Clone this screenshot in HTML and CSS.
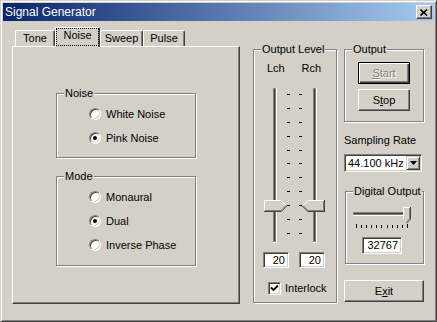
FILE: index.html
```html
<!DOCTYPE html>
<html lang="en">

<head>
    <meta charset="UTF-8">
    <title>Signal Generator</title>
    <link rel="stylesheet" href="styles.css">
</head>

<body>
    <div class="window">
        <div class="titlebar">
            <span class="title">Signal Generator</span>
            <button class="close">
                <svg width="8" height="7" viewBox="0 0 8 7"><path d="M0.5 0.5 L7 6.5 M7 0.5 L0.5 6.5" stroke="#000" stroke-width="1.6" /></svg>
            </button>
        </div>
        <div class="client">
            <div class="tabctl">
                <div class="tabs">
                    <div class="tab tab-tone">Tone</div>
                    <div class="tab tab-noise active"><span>Noise</span></div>
                    <div class="tab tab-sweep">Sweep</div>
                    <div class="tab tab-pulse">Pulse</div>
                </div>
                <div class="pane">
                    <div class="group noise-group">
                        <span class="group-label">Noise</span>
                        <div class="radio-row"><span class="radio"></span>White Noise</div>
                        <div class="radio-row"><span class="radio checked"></span>Pink Noise</div>
                    </div>
                    <div class="group mode-group">
                        <span class="group-label">Mode</span>
                        <div class="radio-row"><span class="radio"></span>Monaural</div>
                        <div class="radio-row"><span class="radio checked"></span>Dual</div>
                        <div class="radio-row"><span class="radio"></span>Inverse Phase</div>
                    </div>
                </div>
            </div>

            <div class="group level-group">
                <span class="group-label">Output Level</span>
                <div class="level-head">
                    <span class="ch">Lch</span>
                    <span class="ch">Rch</span>
                </div>
                <svg class="level-sliders" width="68" height="160" viewBox="0 0 68 160">
                    <!-- tracks -->
                    <rect x="11" y="2" width="4" height="155" fill="#fff" />
                    <rect x="11" y="2" width="3" height="154" fill="#808080" />
                    <rect x="12" y="3" width="1" height="152" fill="#404040" />
                    <rect x="51" y="2" width="4" height="155" fill="#fff" />
                    <rect x="51" y="2" width="3" height="154" fill="#808080" />
                    <rect x="52" y="3" width="1" height="152" fill="#404040" />
                    <!-- ticks -->
                    <g fill="#000">
                        <rect x="25" y="8" width="3" height="1" /><rect x="37" y="8" width="3" height="1" />
                        <rect x="25" y="22" width="3" height="1" /><rect x="37" y="22" width="3" height="1" />
                        <rect x="25" y="36" width="3" height="1" /><rect x="37" y="36" width="3" height="1" />
                        <rect x="25" y="50" width="3" height="1" /><rect x="37" y="50" width="3" height="1" />
                        <rect x="25" y="64" width="3" height="1" /><rect x="37" y="64" width="3" height="1" />
                        <rect x="25" y="77" width="3" height="1" /><rect x="37" y="77" width="3" height="1" />
                        <rect x="25" y="91" width="3" height="1" /><rect x="37" y="91" width="3" height="1" />
                        <rect x="25" y="105" width="3" height="1" /><rect x="37" y="105" width="3" height="1" />
                        <rect x="25" y="119" width="3" height="1" /><rect x="37" y="119" width="3" height="1" />
                        <rect x="25" y="133" width="3" height="1" /><rect x="37" y="133" width="3" height="1" />
                        <rect x="25" y="147" width="3" height="1" /><rect x="37" y="147" width="3" height="1" />
                    </g>
                    <!-- left thumb -->
                    <polygon points="2,114 19,114 25,120 19,126 2,126" fill="#d4d0c8" />
                    <polyline points="2.5,125.5 2.5,114.5 19,114.5 24.5,120" fill="none" stroke="#fff" />
                    <polyline points="2,125.5 19.2,125.5 25.2,119.5" fill="none" stroke="#404040" />
                    <polyline points="3,124.5 18.8,124.5 24,119.3" fill="none" stroke="#808080" />
                    <!-- right thumb -->
                    <polygon points="63,114 46,114 40,120 46,126 63,126" fill="#d4d0c8" />
                    <polyline points="40.5,120 46,114.5 62.5,114.5" fill="none" stroke="#fff" />
                    <polyline points="40,119.8 46,125.5 63,125.5 62.5,125.5 62.5,114" fill="none" stroke="#404040" />
                    <polyline points="41.5,120 46.2,124.5 61.5,124.5 61.5,115" fill="none" stroke="#808080" />
                </svg>
                <div class="level-edits">
                    <div class="edit">20</div>
                    <div class="edit">20</div>
                </div>
                <div class="level-check">
                    <span class="checkbox">
                        <svg width="9" height="9" viewBox="0 0 9 9"><path d="M1 3.5 L3.5 6 L8 1.5" fill="none" stroke="#000" stroke-width="1.8" /></svg>
                    </span>
                    Interlock
                </div>
            </div>

            <div class="side">
                <div class="group output-group">
                    <span class="group-label">Output</span>
                    <button class="btn default" disabled><u>S</u>tart</button>
                    <button class="btn stop">S<u>t</u>op</button>
                </div>
                <div class="rate-label">Sampling Rate</div>
                <div class="combo">
                    <span class="combo-text">44.100 kHz</span>
                    <span class="combo-btn">
                        <svg width="7" height="4" viewBox="0 0 7 4"><polygon points="0,0 7,0 3.5,4" fill="#000" /></svg>
                    </span>
                </div>
                <div class="group digital-group">
                    <span class="group-label">Digital Output</span>
                    <svg class="digital-slider" width="64" height="26" viewBox="0 0 64 26">
                        <rect x="3" y="7" width="56" height="4" fill="#fff" />
                        <rect x="3" y="7" width="55" height="3" fill="#808080" />
                        <rect x="4" y="8" width="54" height="1" fill="#404040" />
                        <g fill="#000">
                            <rect x="6" y="19" width="1" height="4" />
                            <rect x="11" y="20" width="1" height="3" />
                            <rect x="16" y="20" width="1" height="3" />
                            <rect x="21" y="20" width="1" height="3" />
                            <rect x="26" y="20" width="1" height="3" />
                            <rect x="31" y="20" width="1" height="3" />
                            <rect x="37" y="20" width="1" height="3" />
                            <rect x="42" y="20" width="1" height="3" />
                            <rect x="47" y="20" width="1" height="3" />
                            <rect x="52" y="20" width="1" height="3" />
                            <rect x="57" y="19" width="1" height="4" />
                        </g>
                        <polygon points="53,2 60,2 60,14 56.5,17.5 53,14" fill="#d4d0c8" />
                        <polyline points="53.5,14 53.5,2.5 59.5,2.5" fill="none" stroke="#fff" />
                        <polyline points="60.5,2 60.5,14.2 56.5,18.2" fill="none" stroke="#404040" />
                        <polyline points="59.5,3 59.5,13.8 56.5,16.8" fill="none" stroke="#808080" />
                    </svg>
                    <div class="edit digital-edit">32767</div>
                </div>
                <button class="btn exit">E<u>x</u>it</button>
            </div>
        </div>
    </div>
</body>

</html>
```

FILE: styles.css
```css
body {
    margin: 0;
    font-family: "Liberation Sans", Arial, sans-serif;
    font-size: 11px;
    color: #000;
    background: #d4d0c8;
}

.window {
    width: 437px;
    height: 322px;
    box-sizing: border-box;
    border: 1px solid;
    border-color: #d4d0c8 #404040 #404040 #d4d0c8;
    box-shadow: inset 1px 1px #fff, inset -1px -1px #808080;
    padding: 2px;
    background: #d4d0c8;
}

.titlebar {
    height: 18px;
    display: flex;
    align-items: center;
    justify-content: space-between;
    padding: 0 2px 0 2px;
    background: linear-gradient(to right, #0a246a, #a6caf0);
    color: #fff;
    font-size: 12px;
}

.close {
    width: 16px;
    height: 14px;
    padding: 0;
    display: flex;
    align-items: center;
    justify-content: center;
    background: #d4d0c8;
    border: 1px solid;
    border-color: #fff #404040 #404040 #fff;
    box-shadow: inset -1px -1px #808080;
}

.client {
    display: flex;
    align-items: flex-start;
    padding: 6px 0 0 9px;
}

/* tab control */

.tabctl {
    width: 228px;
}

.tabs {
    display: flex;
    align-items: flex-end;
    height: 19px;
    padding-left: 3px;
}

.tab {
    height: 16px;
    box-sizing: border-box;
    padding-top: 1px;
    border: 1px solid;
    border-bottom: none;
    border-color: #fff #404040 #fff #fff;
    box-shadow: inset -1px 0 #808080;
    border-radius: 2px 2px 0 0;
    text-align: center;
    line-height: 13px;
}

.tab-tone { width: 40px; }
.tab-noise { width: 45px; }
.tab-sweep { width: 43px; }
.tab-pulse { width: 42px; }

.tab.active {
    height: 20px;
    margin-bottom: -1px;
    padding-top: 0;
    position: relative;
    background: #d4d0c8;
}

.tab.active span {
    display: block;
    height: 16px;
    border: 1px dotted #000;
}

.pane {
    height: 258px;
    box-sizing: border-box;
    border: 1px solid;
    border-color: #fff #404040 #404040 #fff;
    box-shadow: inset -1px -1px #808080;
    padding: 46px 0 0 43px;
}

/* group boxes */

.group {
    position: relative;
    box-sizing: border-box;
    border: 1px solid #808080;
    box-shadow: inset 1px 1px #fff, 1px 1px #fff;
}

.group-label {
    position: absolute;
    top: -7px;
    left: 7px;
    padding: 0 1px;
    line-height: 13px;
    background: #d4d0c8;
    white-space: nowrap;
}

.noise-group {
    width: 140px;
    height: 65px;
    padding: 8px 0 0 32px;
}

.mode-group {
    width: 140px;
    height: 90px;
    margin-top: 18px;
    padding: 8px 0 0 32px;
}

.radio-row {
    display: flex;
    align-items: center;
    gap: 5px;
    height: 24px;
    line-height: 13px;
}

.radio {
    position: relative;
    width: 12px;
    height: 12px;
    box-sizing: border-box;
    border-radius: 50%;
    border: 1px solid;
    border-color: #808080 #fff #fff #808080;
    box-shadow: inset 1px 1px #404040, inset -1px -1px #d4d0c8;
    background: #fff;
}

.radio.checked::after {
    content: "";
    position: absolute;
    left: 3px;
    top: 3px;
    width: 4px;
    height: 4px;
    border-radius: 50%;
    background: #000;
}

/* output level */

.level-group {
    width: 84px;
    height: 254px;
    margin: 22px 0 0 13px;
    padding-top: 12px;
}

.level-head {
    display: flex;
    padding-left: 13px;
    line-height: 13px;
}

.level-head .ch {
    width: 36px;
}

.level-sliders {
    display: block;
    margin: 11px 0 0 8px;
}

.level-edits {
    display: flex;
    gap: 10px;
    margin-top: 6px;
    padding-left: 9px;
}

.edit {
    width: 26px;
    height: 16px;
    box-sizing: border-box;
    border: 1px solid;
    border-color: #808080 #fff #fff #808080;
    box-shadow: inset 1px 1px #404040, inset -1px -1px #d4d0c8;
    background: #fff;
    text-align: right;
    padding-right: 3px;
    line-height: 14px;
}

.level-check {
    display: flex;
    align-items: center;
    gap: 4px;
    margin-top: 14px;
    padding-left: 14px;
    line-height: 13px;
}

.checkbox {
    display: flex;
    align-items: center;
    justify-content: center;
    width: 13px;
    height: 13px;
    box-sizing: border-box;
    border: 1px solid;
    border-color: #808080 #fff #fff #808080;
    box-shadow: inset 1px 1px #404040, inset -1px -1px #d4d0c8;
    background: #fff;
}

/* right column */

.side {
    width: 80px;
    margin: 22px 0 0 7px;
}

.output-group {
    height: 73px;
    padding: 12px 0 0 13px;
}

.btn {
    display: block;
    width: 52px;
    height: 22px;
    box-sizing: border-box;
    padding: 0;
    border: 1px solid;
    border-color: #fff #404040 #404040 #fff;
    box-shadow: inset -1px -1px #808080;
    background: #d4d0c8;
    font: inherit;
    color: #000;
}

.btn.default {
    border-color: #000;
    box-shadow: inset 1px 1px #fff, inset -1px -1px #404040, inset -2px -2px #808080;
}

.btn:disabled {
    color: #808080;
    text-shadow: 1px 1px #fff;
}

.btn.stop {
    margin-top: 5px;
}

.rate-label {
    margin-top: 12px;
    line-height: 13px;
}

.combo {
    display: flex;
    justify-content: space-between;
    width: 78px;
    height: 18px;
    margin-top: 7px;
    box-sizing: border-box;
    padding: 1px;
    border: 1px solid;
    border-color: #808080 #fff #fff #808080;
    box-shadow: inset 1px 1px #404040, inset -1px -1px #d4d0c8;
    background: #fff;
}

.combo-text {
    padding-left: 2px;
    line-height: 14px;
}

.combo-btn {
    display: flex;
    align-items: center;
    justify-content: center;
    width: 14px;
    height: 14px;
    box-sizing: border-box;
    border: 1px solid;
    border-color: #d4d0c8 #404040 #404040 #d4d0c8;
    box-shadow: inset 1px 1px #fff, inset -1px -1px #808080;
    background: #d4d0c8;
}

.digital-group {
    width: 79px;
    height: 73px;
    margin: 19px 0 0 1px;
    padding: 13px 0 0 4px;
}

.digital-slider {
    display: block;
}

.digital-edit {
    width: 40px;
    height: 17px;
    margin: 6px 0 0 12px;
    line-height: 15px;
}

.btn.exit {
    width: 80px;
    margin-top: 16px;
}
```
